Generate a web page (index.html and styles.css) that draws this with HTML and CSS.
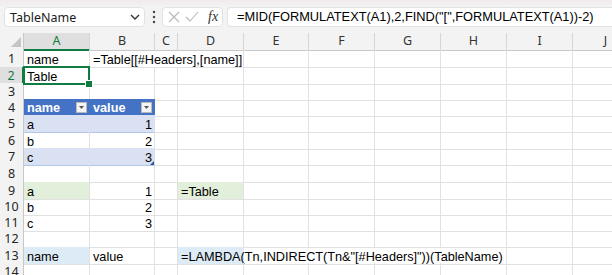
FILE: index.html
```html
<!DOCTYPE html>
<html lang="en">
<head>
<meta charset="UTF-8">
<title>TableName</title>
<link rel="stylesheet" href="styles.css">
</head>
<body>
<div class="formula-bar">
  <div class="name-box">
    <span>TableName</span>
    <svg class="chevron" width="10" height="6" viewBox="0 0 10 6"><polyline points="1,1 5,5 9,1" fill="none" stroke="#333" stroke-width="1.4"/></svg>
  </div>
  <div class="grip">
    <svg width="4" height="14" viewBox="0 0 4 14"><circle cx="2" cy="2" r="1.2" fill="#444"/><circle cx="2" cy="7" r="1.2" fill="#444"/><circle cx="2" cy="12" r="1.2" fill="#444"/></svg>
  </div>
  <div class="fx-box">
    <svg width="12" height="12" viewBox="0 0 12 12"><path d="M1 1L11 11M11 1L1 11" stroke="#b8b8b8" stroke-width="1.1"/></svg>
    <svg width="14" height="12" viewBox="0 0 14 12"><polyline points="1,6 5,10 13,1" fill="none" stroke="#b8b8b8" stroke-width="1.1"/></svg>
    <span class="fx">fx</span>
  </div>
  <div class="formula-input">=MID(FORMULATEXT(A1),2,FIND("[",FORMULATEXT(A1))-2)</div>
</div>

<div class="sheet">
  <div class="row hdr">
    <div class="corner"><svg width="24" height="16" viewBox="0 0 24 16"><polygon points="11,14 21,14 21,4" fill="#c4c4c4"/></svg></div>
    <div class="ch sel">A</div><div class="ch">B</div><div class="ch">C</div><div class="ch">D</div><div class="ch">E</div>
    <div class="ch">F</div><div class="ch">G</div><div class="ch">H</div><div class="ch">I</div><div class="ch">J</div>
  </div>

  <div class="row h17">
    <div class="rh">1</div>
    <div class="c">name</div><div class="c nb">=Table[[#Headers],[name]]</div><div class="c nb"></div><div class="c"></div>
    <div class="c"></div><div class="c"></div><div class="c"></div><div class="c"></div><div class="c"></div><div class="c"></div>
  </div>

  <div class="row h16">
    <div class="rh sel">2</div>
    <div class="c active">Table</div><div class="c"></div><div class="c"></div><div class="c"></div>
    <div class="c"></div><div class="c"></div><div class="c"></div><div class="c"></div><div class="c"></div><div class="c"></div>
  </div>

  <div class="row h16">
    <div class="rh">3</div>
    <div class="c"></div><div class="c"></div><div class="c"></div><div class="c"></div>
    <div class="c"></div><div class="c"></div><div class="c"></div><div class="c"></div><div class="c"></div><div class="c"></div>
  </div>

  <div class="row h16">
    <div class="rh">4</div>
    <div class="c th"><span>name</span><span class="filter"><svg width="5" height="3" viewBox="0 0 5 3"><polygon points="0,0 5,0 2.5,3" fill="#555"/></svg></span></div>
    <div class="c th"><span>value</span><span class="filter"><svg width="5" height="3" viewBox="0 0 5 3"><polygon points="0,0 5,0 2.5,3" fill="#555"/></svg></span></div>
    <div class="c"></div><div class="c"></div>
    <div class="c"></div><div class="c"></div><div class="c"></div><div class="c"></div><div class="c"></div><div class="c"></div>
  </div>

  <div class="row h17">
    <div class="rh">5</div>
    <div class="c band">a</div><div class="c band num">1</div><div class="c"></div><div class="c"></div>
    <div class="c"></div><div class="c"></div><div class="c"></div><div class="c"></div><div class="c"></div><div class="c"></div>
  </div>

  <div class="row h16">
    <div class="rh">6</div>
    <div class="c plain">b</div><div class="c plain num">2</div><div class="c"></div><div class="c"></div>
    <div class="c"></div><div class="c"></div><div class="c"></div><div class="c"></div><div class="c"></div><div class="c"></div>
  </div>

  <div class="row h17">
    <div class="rh">7</div>
    <div class="c band">c</div><div class="c band num resize">3</div><div class="c"></div><div class="c"></div>
    <div class="c"></div><div class="c"></div><div class="c"></div><div class="c"></div><div class="c"></div><div class="c"></div>
  </div>

  <div class="row h17">
    <div class="rh">8</div>
    <div class="c"></div><div class="c"></div><div class="c"></div><div class="c"></div>
    <div class="c"></div><div class="c"></div><div class="c"></div><div class="c"></div><div class="c"></div><div class="c"></div>
  </div>

  <div class="row h16">
    <div class="rh">9</div>
    <div class="c green">a</div><div class="c num">1</div><div class="c"></div><div class="c green">=Table</div>
    <div class="c"></div><div class="c"></div><div class="c"></div><div class="c"></div><div class="c"></div><div class="c"></div>
  </div>

  <div class="row h16">
    <div class="rh">10</div>
    <div class="c">b</div><div class="c num">2</div><div class="c"></div><div class="c"></div>
    <div class="c"></div><div class="c"></div><div class="c"></div><div class="c"></div><div class="c"></div><div class="c"></div>
  </div>

  <div class="row h16">
    <div class="rh">11</div>
    <div class="c">c</div><div class="c num">3</div><div class="c"></div><div class="c"></div>
    <div class="c"></div><div class="c"></div><div class="c"></div><div class="c"></div><div class="c"></div><div class="c"></div>
  </div>

  <div class="row h17">
    <div class="rh">12</div>
    <div class="c"></div><div class="c"></div><div class="c"></div><div class="c"></div>
    <div class="c"></div><div class="c"></div><div class="c"></div><div class="c"></div><div class="c"></div><div class="c"></div>
  </div>

  <div class="row h16">
    <div class="rh">13</div>
    <div class="c blue">name</div><div class="c">value</div><div class="c"></div><div class="c blue nb">=LAMBDA(Tn,INDIRECT(Tn&amp;"[#Headers]"))(TableName)</div>
    <div class="c nb"></div><div class="c nb"></div><div class="c nb"></div><div class="c"></div><div class="c"></div><div class="c"></div>
  </div>

  <div class="row h16">
    <div class="rh">14</div>
    <div class="c"></div><div class="c"></div><div class="c"></div><div class="c"></div>
    <div class="c"></div><div class="c"></div><div class="c"></div><div class="c"></div><div class="c"></div><div class="c"></div>
  </div>
</div>
</body>
</html>
```

FILE: styles.css
```css
* {
    box-sizing: border-box;
}
body {
    margin: 0;
    width: 612px;
    height: 275px;
    overflow: hidden;
    background: #fff;
    font-family: "Liberation Sans", Arial, sans-serif;
    color: #000;
}

/* formula bar */
.formula-bar {
    height: 33px;
    display: flex;
    align-items: center;
    padding: 1px 0 0 4px;
    background: linear-gradient(#f1eaee, #f3f3f3 7px);
}
.name-box {
    width: 141px;
    height: 20px;
    flex: none;
    display: flex;
    align-items: center;
    justify-content: space-between;
    padding: 0 4px 0 5px;
    background: #fff;
    border: 1px solid #e2e2e2;
    border-radius: 4px;
    font-family: "Noto Sans", sans-serif;
    font-size: 12.5px;
    color: #1b1b1b;
}
.grip {
    width: 17px;
    flex: none;
    display: flex;
    justify-content: center;
}
.fx-box {
    width: 61px;
    height: 20px;
    flex: none;
    display: flex;
    align-items: center;
    gap: 5px;
    padding-left: 5px;
    background: #fff;
    border: 1px solid #e2e2e2;
    border-radius: 4px;
}
.fx {
    font-family: "Liberation Serif", serif;
    font-style: italic;
    font-size: 14px;
    color: #333;
    margin-left: 4px;
}
.formula-input {
    flex: 1;
    height: 20px;
    margin-left: 4px;
    padding-left: 9px;
    background: #fff;
    border: 1px solid #e2e2e2;
    border-right: none;
    border-radius: 4px 0 0 4px;
    font-size: 12.8px;
    line-height: 18px;
    white-space: nowrap;
    overflow: hidden;
}

/* sheet grid */
.row {
    display: grid;
    grid-template-columns: 24px 66px 65px 23px 66px 65px 66px 66px 66px 66px 66px;
}
.hdr { height: 17px; }
.h16 { height: 16px; }
.h17 { height: 17px; }

.corner {
    background: #f3f3f3;
    border-right: 1px solid #c8c8c8;
    border-bottom: 1px solid #c8c8c8;
}
.corner svg {
    display: block;
}
.ch {
    background: #f3f3f3;
    border-right: 1px solid #d6d6d6;
    border-bottom: 1px solid #c8c8c8;
    text-align: center;
    font-family: "Noto Sans", sans-serif;
    font-size: 12.5px;
    line-height: 16px;
    color: #333;
}
.ch.sel {
    background: #dfdfdf;
    color: #107c41;
    border-bottom: 2px solid #107c41;
}
.rh {
    background: #f3f3f3;
    border-right: 1px solid #c8c8c8;
    border-bottom: 1px solid #d6d6d6;
    display: flex;
    align-items: center;
    justify-content: center;
    font-family: "Noto Sans", sans-serif;
    font-size: 12.5px;
    color: #262626;
}
.rh.sel {
    background: #dfdfdf;
    color: #107c41;
    border-right: 2px solid #107c41;
}

.c {
    display: flex;
    align-items: flex-end;
    padding: 0 3px;
    border-right: 1px solid #e1e1e1;
    border-bottom: 1px solid #e1e1e1;
    font-size: 12.7px;
    line-height: 14px;
    white-space: nowrap;
}
.c.nb {
    border-right-color: transparent;
}
.c.num {
    justify-content: flex-end;
    padding-right: 2px;
}

.c.active {
    position: relative;
}
.c.active::after {
    content: "";
    position: absolute;
    left: -1px;
    top: -1px;
    right: -1px;
    bottom: -1px;
    border: 2px solid #107c41;
}
.c.active::before {
    content: "";
    position: absolute;
    right: -4px;
    bottom: -4px;
    width: 6px;
    height: 6px;
    background: #107c41;
    border: 1px solid #fff;
    z-index: 2;
}

/* table */
.c.th {
    background: #4472c4;
    border-color: #4472c4;
    color: #fff;
    font-weight: bold;
    align-items: center;
    justify-content: space-between;
    padding-right: 2px;
}
.filter {
    width: 11px;
    height: 11px;
    display: flex;
    align-items: center;
    justify-content: center;
    background: #f4f4f4;
    border: 1px solid #b9b9b9;
}
.filter svg {
    display: block;
}
.c.band {
    background: #d9e1f2;
    border-right-color: #d9e1f2;
    border-bottom-color: #b4c6e7;
}
.c.plain {
    border-bottom-color: #b4c6e7;
}
.c.resize {
    position: relative;
}
.c.resize::after {
    content: "";
    position: absolute;
    right: 0;
    bottom: 0;
    border-left: 4px solid transparent;
    border-bottom: 4px solid #2f5597;
}

.c.green {
    background: #e2efda;
}
.c.blue {
    background: #ddebf7;
}
```
